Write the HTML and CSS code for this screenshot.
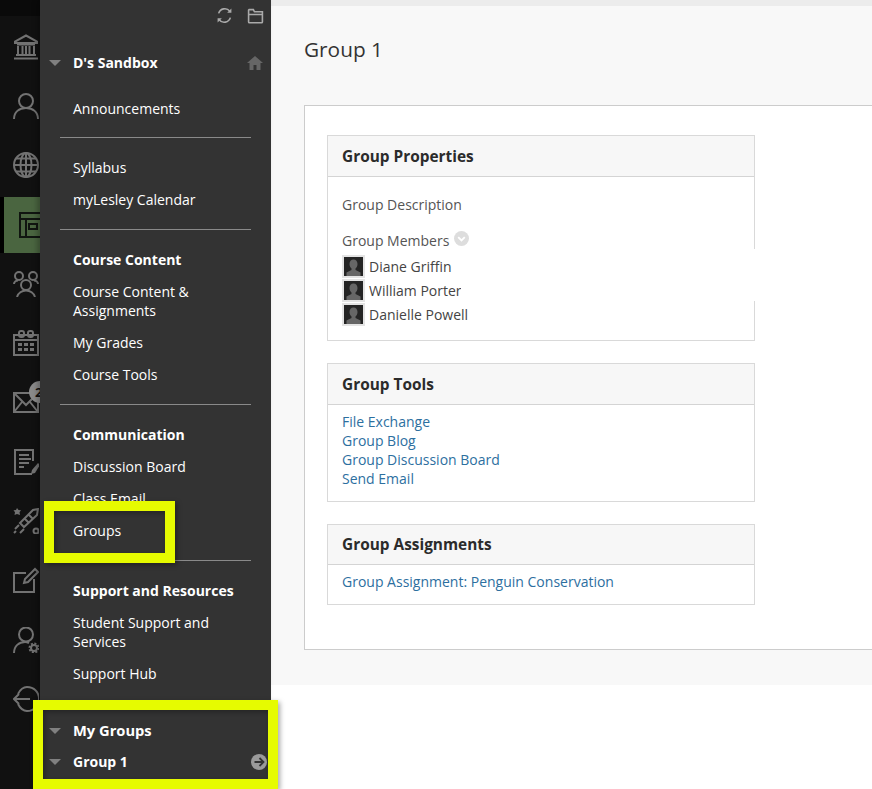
FILE: index.html
```html
<!DOCTYPE html>
<html lang="en">
<head>
<meta charset="utf-8">
<title>Group 1</title>
<link rel="stylesheet" href="styles.css">
</head>
<body>
<div class="page">
  <nav class="rail">
    <a class="rail-item"><svg class="ri" viewBox="0 0 26 26"><path d="M13 1.500 2 7.500v1.500h22V7.500zM4 10.500h18M5 12v8M9.500 12v8M13 12v8M16.500 12v8M21 12v8M3 21h20M1 24.500h24"/></svg></a>
    <a class="rail-item"><svg class="ri" viewBox="0 0 26 26"><circle cx="13" cy="8" r="7"/><path d="M1 26c0-7 5-11 12-11s12 4 12 11"/></svg></a>
    <a class="rail-item"><svg class="ri" viewBox="0 0 26 26"><circle cx="13" cy="13" r="12"/><ellipse cx="13" cy="13" rx="5.500" ry="12"/><path d="M13 1v24M1 13h24M3 6.500h20M3 19.500h20"/></svg></a>
    <a class="rail-item active"><svg class="ri" viewBox="0 0 26 26"><path d="M1 1h25v24H1zM1 7h25M7 7v18M10 12h8v5h-8z"/></svg></a>
    <a class="rail-item"><svg class="ri" viewBox="0 0 26 26"><circle cx="6" cy="5" r="4"/><circle cx="20" cy="5" r="4"/><circle cx="13" cy="14" r="5"/><path d="M1 13c0-2 2-3.500 4-3.500M25 13c0-2-2-3.500-4-3.500M4 26c1-4 5-6.500 9-6.500s8 2.500 9 6.500"/></svg></a>
    <a class="rail-item"><svg class="ri" viewBox="0 0 26 26"><path d="M1 5h24v20H1zM1 10h24"/><rect x="6" y="1" width="5" height="6" rx="2"/><rect x="15" y="1" width="5" height="6" rx="2"/><path class="fill" d="M5 13h4v3H5zM11 13h4v3h-4zM17 13h4v3h-4zM5 18h4v3H5zM11 18h4v3h-4zM17 18h4v3h-4z"/></svg></a>
    <a class="rail-item"><svg class="ri" viewBox="0 0 26 26"><path d="M1 4h24v19H1zM1 4l12 12L25 4M1 23l8-10M25 23l-8-10"/></svg><span class="badge">2</span></a>
    <a class="rail-item"><svg class="ri" viewBox="0 0 26 26"><path d="M20 12V1H2v24h17M6 6h10M6 10h12M6 14h10M6 18h5"/><path class="fill" d="M25 14l2 2-5 8-4 1 1-4z"/></svg></a>
    <a class="rail-item"><svg class="ri" viewBox="0 0 26 26"><path d="M7 15 20 2l5-1-1 6-13 12zM11 10l5 5M15 6l5 5M2 21l4-4M7 25l4-4M1 25l2-2"/><circle cx="23" cy="23" r="2.500"/><path class="fill" d="M4 0l1.500 2 2.500.3-1.500 2 .5 2.700-3-1-2.500 1 .5-2.700-1.500-2 2.500-.3z"/></svg></a>
    <a class="rail-item"><svg class="ri" viewBox="0 0 26 26"><path d="M13 6H1v19h20V12M11 16l1-4L22 2l3 3-10 10z"/></svg></a>
    <a class="rail-item"><svg class="ri" viewBox="0 0 26 26"><circle cx="13" cy="7.500" r="7"/><path d="M1 26c0-7 5-11 11-11 2 0 3 .5 4 1"/><circle cx="21" cy="21" r="3"/><circle class="dash" cx="21" cy="21" r="4.500"/></svg></a>
    <a class="rail-item"><svg class="ri" viewBox="0 0 26 26"><path d="M5 8c2-4 5-7 9-7 7 0 12 5 12 12s-5 12-12 12c-4 0-7-3-9-7M1 13h16M6 8l-5 5 5 5"/></svg></a>
  </nav>

  <aside class="sidebar">
    <div class="toolbar">
      <svg class="tool" viewBox="0 0 16 16"><path d="M2.500 6A6 6 0 0 1 13 4M13.500 10A6 6 0 0 1 3 12"/><path class="solid" d="M14.500 1.500v4h-4zM1.500 14.500v-4h4z"/></svg>
      <svg class="tool" viewBox="0 0 16 16"><path d="M2 2.500h4l1 2h7.500V14a.800.800 0 0 1-.800.800H2.300A.800.800 0 0 1 1.500 14V3zM1.500 7h13"/></svg>
    </div>
    <div class="course-head">
      <span class="tri"></span><strong>D's Sandbox</strong>
      <svg class="home" viewBox="0 0 16 14"><path d="M8 0 0 7h2.500v7h4V9h3v5h4V7H16z"/></svg>
    </div>
    <ul class="section first">
      <li>Announcements</li>
    </ul>
    <ul class="section">
      <li>Syllabus</li>
      <li>myLesley Calendar</li>
    </ul>
    <ul class="section">
      <li class="bold">Course Content</li>
      <li>Course Content &amp; Assignments</li>
      <li>My Grades</li>
      <li>Course Tools</li>
    </ul>
    <ul class="section">
      <li class="bold">Communication</li>
      <li>Discussion Board</li>
      <li>Class Email</li>
      <li>Groups</li>
    </ul>
    <ul class="section last">
      <li class="bold">Support and Resources</li>
      <li>Student Support and Services</li>
      <li>Support Hub</li>
    </ul>
    <div class="groups">
      <div class="group-row big"><span class="tri"></span><strong>My Groups</strong></div>
      <div class="group-row">
        <span class="tri"></span><strong>Group 1</strong>
        <svg class="go" viewBox="0 0 16 16"><circle class="go-bg" cx="8" cy="8" r="8"/><path d="M3.500 8h8.500M8.500 4l4 4-4 4"/></svg>
      </div>
    </div>
  </aside>

  <main class="main">
    <div class="content">
      <h1>Group 1</h1>
      <section class="panel">
        <div class="card">
          <h2>Group Properties</h2>
          <div class="card-body props">
            <p class="label">Group Description</p>
            <p class="label members">Group Members
              <svg class="chev" viewBox="0 0 16 16"><circle cx="8" cy="8" r="8"/><path d="M4.500 6.500 8 10l3.500-3.500"/></svg>
            </p>
            <div class="person"><svg class="avatar" viewBox="0 0 19 19"><rect width="19" height="19"/><path class="sil" d="M9.500 2.500c2.500 0 4 1.800 4 4.500 0 2-1 3.700-2 4.500v1.500l5 2.500v3.500H2.500V15.500l5-2.500v-1.500c-1-.8-2-2.500-2-4.500 0-2.700 1.500-4.500 4-4.500z"/></svg><span>Diane Griffin</span></div>
            <div class="person"><svg class="avatar" viewBox="0 0 19 19"><rect width="19" height="19"/><path class="sil" d="M9.500 2.500c2.500 0 4 1.800 4 4.500 0 2-1 3.700-2 4.500v1.500l5 2.500v3.500H2.500V15.500l5-2.500v-1.500c-1-.8-2-2.500-2-4.500 0-2.700 1.500-4.500 4-4.500z"/></svg><span>William Porter</span></div>
            <div class="person"><svg class="avatar" viewBox="0 0 19 19"><rect width="19" height="19"/><path class="sil" d="M9.500 2.500c2.500 0 4 1.800 4 4.500 0 2-1 3.700-2 4.500v1.500l5 2.500v3.500H2.500V15.500l5-2.500v-1.500c-1-.8-2-2.500-2-4.500 0-2.700 1.500-4.500 4-4.500z"/></svg><span>Danielle Powell</span></div>
          </div>
          <div class="patch"></div>
        </div>
        <div class="card">
          <h2>Group Tools</h2>
          <div class="card-body links">
            <a>File Exchange</a>
            <a>Group Blog</a>
            <a>Group Discussion Board</a>
            <a>Send Email</a>
          </div>
        </div>
        <div class="card">
          <h2 class="short">Group Assignments</h2>
          <div class="card-body links one">
            <a>Group Assignment: Penguin Conservation</a>
          </div>
        </div>
      </section>
    </div>
  </main>

  <div class="mark mark-groups"></div>
  <div class="mark mark-mine"></div>
</div>
</body>
</html>
```

FILE: styles.css
```css
* { box-sizing: border-box; }

html, body {
  margin: 0;
  height: 100%;
  background: #fff;
  overflow: hidden;
}

body {
  font-family: "Open Sans", "Noto Sans", sans-serif;
  font-size: 14px;
  line-height: 19px;
}

.page {
  position: relative;
  display: flex;
  width: 872px;
  height: 789px;
  overflow: hidden;
}

/* Icon rail */
.rail {
  flex: 0 0 40px;
  height: 100%;
  padding-top: 17px;
  overflow: hidden;
  background: linear-gradient(#0a0a0a 16px, #111 16px);
}

.rail-item {
  position: relative;
  display: flex;
  align-items: center;
  height: 59.3px;
  padding-left: 13px;
}

.rail-item.active {
  height: 56px;
  margin: 2px 0 1.300px;
  padding-left: 15px;
  border-left: 4px solid #000;
  background: #4a6540;
}

.ri {
  flex: none;
  width: 26px;
  height: 26px;
  fill: none;
  stroke: #727272;
  stroke-width: 2;
}

.ri .fill { fill: #727272; stroke: none; }
.ri .dash { stroke-dasharray: 2 1.500; stroke-width: 2; }

.active .ri { stroke: #101510; }

.badge {
  position: absolute;
  left: 29px;
  top: 8px;
  width: 22px;
  height: 22px;
  padding-left: 6px;
  border-radius: 50%;
  background: #8a8a8a;
  color: #111;
  font-size: 13px;
  font-weight: 700;
  line-height: 22px;
}

/* Course menu */
.sidebar {
  flex: 0 0 231px;
  height: 100%;
  color: #fff;
  background: #333;
  box-shadow: -3px 0 5px rgba(0, 0, 0, .25);
  z-index: 1;
}

.toolbar {
  display: flex;
  justify-content: flex-end;
  align-items: center;
  gap: 14px;
  height: 30px;
  padding-right: 7px;
}

.tool {
  width: 17px;
  height: 17px;
  fill: none;
  stroke: #aaa;
  stroke-width: 1.500;
}

.tool .solid { fill: #aaa; stroke: none; }

.course-head {
  display: flex;
  align-items: center;
  height: 19px;
  margin-top: 23px;
  padding-right: 8px;
}

.tri {
  flex: none;
  width: 0;
  height: 0;
  margin: 1px 12px 0 9px;
  border-style: solid;
  border-width: 6px 6px 0;
  border-color: #808080 transparent transparent;
}

.course-head strong, .group-row strong { font-weight: 700; }

.home {
  flex: none;
  width: 16px;
  height: 14px;
  margin-left: auto;
  fill: #666;
}

.section {
  margin: 0 20px;
  padding: 20px 0 20px 13px;
  list-style: none;
  border-bottom: 1px solid #8a8a8a;
}

.section.first { padding: 27px 0 19px 13px; }

.section.last { padding-bottom: 0; border-bottom: 0; }

.section li + li { margin-top: 13px; }

.section .bold { font-weight: 700; }

.groups {
  margin-top: 38px;
}

.group-row {
  display: flex;
  align-items: center;
  height: 19px;
  padding-right: 4px;
  margin-top: 12px;
}

.group-row.big { margin-top: 0; font-size: 14.700px; }

.go {
  flex: none;
  width: 16px;
  height: 16px;
  margin-left: auto;
  fill: none;
  stroke: #333;
  stroke-width: 1.800;
}

.go .go-bg { fill: #9a9a9a; stroke: none; }

/* Main area */
.main {
  flex: 1;
  min-width: 0;
  padding-top: 6px;
  background: linear-gradient(#ececec 6px, transparent 6px);
}

.content {
  height: 679px;
  padding: 28px 0 0 33px;
  background: #f8f8f8;
}

h1 {
  margin: 0;
  color: #333;
  font-size: 20.800px;
  font-weight: 400;
  line-height: 30px;
}

.panel {
  height: 545px;
  margin: 41px -2px 0 0;
  padding: 29px 0 0 22px;
  background: #fff;
  border: 1px solid #ccc;
}

.card {
  position: relative;
  width: 428px;
  margin-bottom: 22px;
  border: 1px solid #d9d9d9;
}

.card h2 {
  height: 41px;
  margin: 0;
  padding: 0 14px;
  color: #2b2b2b;
  background: #f7f7f7;
  border-bottom: 1px solid #d4d4d4;
  font-size: 15.400px;
  font-weight: 700;
  line-height: 41px;
}

.card h2.short { height: 40px; line-height: 40px; }

.card-body { padding: 0 14px; }

.props { height: 163px; padding-top: 18px; }

.label {
  margin: 0 0 17px;
  color: #555;
}

.members {
  display: flex;
  align-items: center;
  gap: 5px;
  margin-bottom: 4px;
}

.chev {
  width: 15px;
  height: 15px;
  margin-top: -5px;
  fill: #ddd;
  stroke: none;
}

.chev path {
  fill: none;
  stroke: #fff;
  stroke-width: 2;
}

.person {
  display: flex;
  align-items: center;
  gap: 4px;
  height: 24px;
  color: #444;
}

.avatar {
  flex: none;
  width: 23px;
  height: 23px;
  border: 2px solid #e4e4e4;
  fill: #242424;
}

.avatar .sil { fill: #666; }

.patch {
  position: absolute;
  left: 133px;
  right: -2px;
  top: 113px;
  height: 52px;
  background: #fff;
}

.links {
  display: flex;
  flex-direction: column;
  align-items: flex-start;
  height: 96px;
  padding-top: 7px;
  color: #2d6f9f;
}

.links.one { height: 39px; padding-top: 7px; }

/* Highlight frames */
.mark {
  position: absolute;
  z-index: 2;
  border: 10px solid #e6fb00;
  box-shadow: 2px 2px 5px rgba(0, 0, 0, .35), inset 2px 2px 5px rgba(0, 0, 0, .3);
}

.mark-groups {
  left: 44px;
  top: 501px;
  width: 131px;
  height: 62px;
}

.mark-mine {
  left: 33px;
  top: 700px;
  width: 245px;
  height: 89px;
}
```
